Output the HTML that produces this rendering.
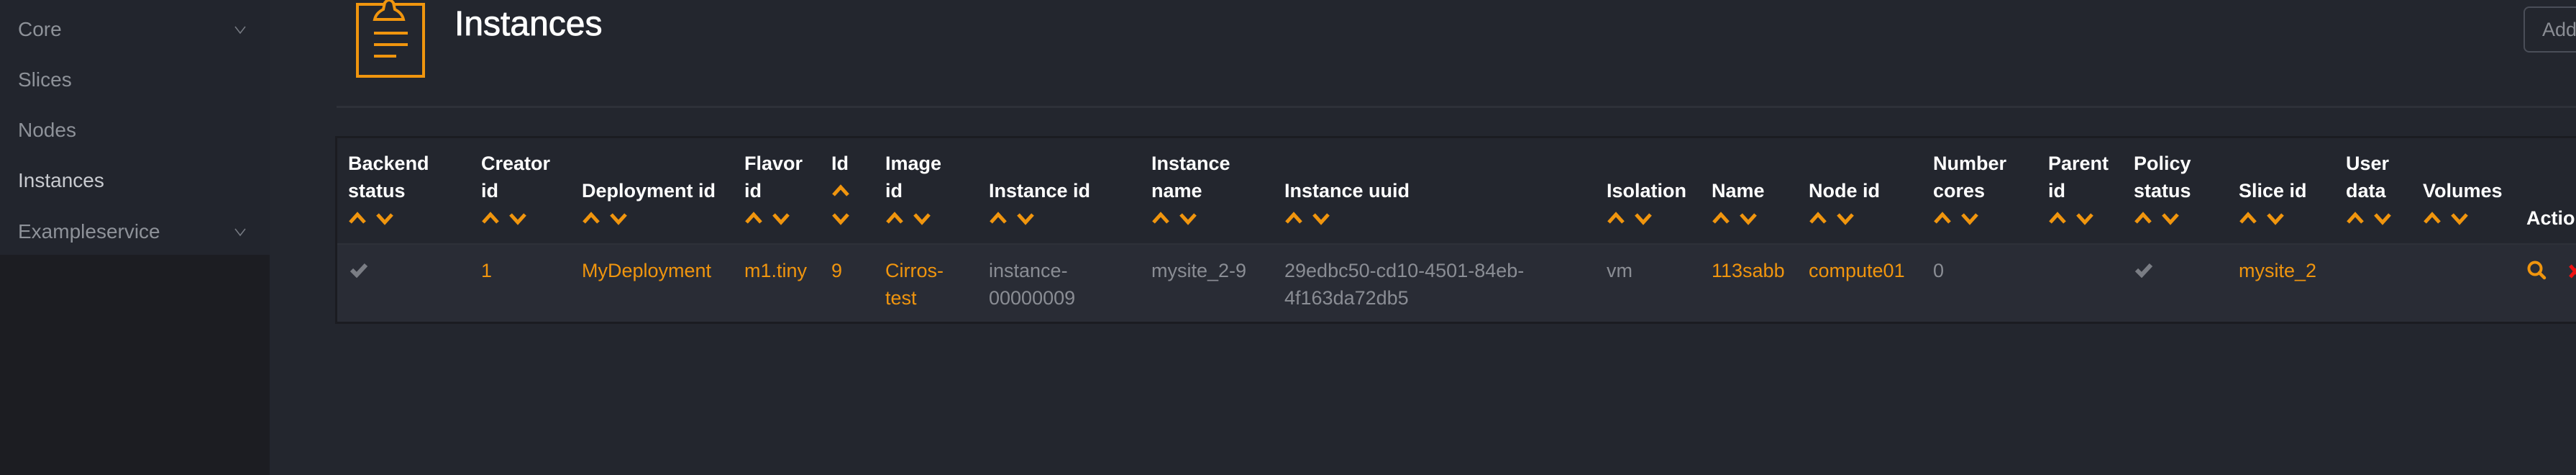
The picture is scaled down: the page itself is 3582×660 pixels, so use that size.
<!DOCTYPE html>
<html><head><meta charset="utf-8"><style>
*{margin:0;padding:0;box-sizing:border-box}
body{width:3582px;height:660px;background:#23262e;font-family:"Liberation Sans",sans-serif;position:relative;overflow:hidden}
.a{position:absolute;white-space:nowrap}
.nav{position:absolute;left:25px;font-size:28px;color:#8e9299;line-height:34px}
.h{position:absolute;font-size:27px;font-weight:bold;color:#fff;line-height:38px;white-space:nowrap}
.c{position:absolute;font-size:27px;color:#8a8d94;line-height:38px;white-space:nowrap}
.o{color:#f0950e}
</style></head><body>
<div class="a" style="left:0;top:0;width:375px;height:354px;background:#22252d"></div>
<div class="a" style="left:0;top:354px;width:375px;height:306px;background:#1c1d22"></div>
<div class="nav" style="top:24px">Core</div>
<div class="nav" style="top:94px">Slices</div>
<div class="nav" style="top:164px">Nodes</div>
<div class="nav" style="top:234px;color:#c8cacf">Instances</div>
<div class="nav" style="top:305px">Exampleservice</div>
<svg class="a" style="left:326px;top:36px" width="16" height="12"><polyline points="1,1 8,10 15,1" fill="none" stroke="#777b83" stroke-width="1.5"/></svg>
<svg class="a" style="left:326px;top:317px" width="16" height="12"><polyline points="1,1 8,10 15,1" fill="none" stroke="#777b83" stroke-width="1.5"/></svg>

<svg class="a" style="left:494px;top:0" width="100" height="110">
<rect x="3" y="6" width="92" height="100" fill="none" stroke="#f0950e" stroke-width="4"/>
<path d="M27 27 Q29 18 39 13 L41 4 Q47 -4 53 4 L55 13 Q65 18 67 27 Z" fill="#23262e" stroke="#f0950e" stroke-width="4"/>
<line x1="26" y1="46" x2="73" y2="46" stroke="#f0950e" stroke-width="4"/>
<line x1="26" y1="62" x2="73" y2="62" stroke="#f0950e" stroke-width="4"/>
<line x1="26" y1="78" x2="57" y2="78" stroke="#f0950e" stroke-width="4"/>
</svg>
<div class="a" style="left:632px;top:6px;font-size:48px;color:#fff;line-height:56px;-webkit-text-stroke:0.8px #fff">Instances</div>
<div class="a" style="left:3509px;top:9px;width:100px;height:64px;border:2px solid #4a4e58;border-radius:8px;color:#8a8d94;font-size:27px;line-height:60px;padding-left:24px">Add</div>
<div class="a" style="left:468px;top:147px;width:3114px;height:3px;background:#2e3139"></div>

<div class="a" style="left:466px;top:189px;width:3130px;height:261px;border:3px solid #1b1c21;background:#23262e"></div>
<div class="a" style="left:469px;top:338px;width:3120px;height:109px;background:#292c35;border-top:2px solid #2e3139"></div>

<div class="h" style="left:484px;top:208px">Backend<br>status</div>
<div class="h" style="left:669px;top:208px">Creator<br>id</div>
<div class="h" style="left:809px;top:246px">Deployment id</div>
<div class="h" style="left:1035px;top:208px">Flavor<br>id</div>
<div class="h" style="left:1156px;top:208px">Id</div>
<div class="h" style="left:1231px;top:208px">Image<br>id</div>
<div class="h" style="left:1375px;top:246px">Instance id</div>
<div class="h" style="left:1601px;top:208px">Instance<br>name</div>
<div class="h" style="left:1786px;top:246px">Instance uuid</div>
<div class="h" style="left:2234px;top:246px">Isolation</div>
<div class="h" style="left:2380px;top:246px">Name</div>
<div class="h" style="left:2515px;top:246px">Node id</div>
<div class="h" style="left:2688px;top:208px">Number<br>cores</div>
<div class="h" style="left:2848px;top:208px">Parent<br>id</div>
<div class="h" style="left:2967px;top:208px">Policy<br>status</div>
<div class="h" style="left:3113px;top:246px">Slice id</div>
<div class="h" style="left:3262px;top:208px">User<br>data</div>
<div class="h" style="left:3369px;top:246px">Volumes</div>
<div class="h" style="left:3513px;top:284px">Actions</div>

<svg class="a" style="left:0;top:0" width="3582" height="340">
<defs>
<g id="u"><polyline points="2,15 12,4 22,15" fill="none" stroke="#f0950e" stroke-width="5"/></g>
<g id="d"><polyline points="2,4 12,15 22,4" fill="none" stroke="#f0950e" stroke-width="5"/></g>
</defs>
<g transform="translate(0,294)">
<use href="#u" x="485"/><use href="#d" x="523"/>
<use href="#u" x="670"/><use href="#d" x="708"/>
<use href="#u" x="810"/><use href="#d" x="848"/>
<use href="#u" x="1036"/><use href="#d" x="1074"/>
<use href="#d" x="1157"/>
<use href="#u" x="1232"/><use href="#d" x="1270"/>
<use href="#u" x="1376"/><use href="#d" x="1414"/>
<use href="#u" x="1602"/><use href="#d" x="1640"/>
<use href="#u" x="1787"/><use href="#d" x="1825"/>
<use href="#u" x="2235"/><use href="#d" x="2273"/>
<use href="#u" x="2381"/><use href="#d" x="2419"/>
<use href="#u" x="2516"/><use href="#d" x="2554"/>
<use href="#u" x="2689"/><use href="#d" x="2727"/>
<use href="#u" x="2849"/><use href="#d" x="2887"/>
<use href="#u" x="2968"/><use href="#d" x="3006"/>
<use href="#u" x="3114"/><use href="#d" x="3152"/>
<use href="#u" x="3263"/><use href="#d" x="3301"/>
<use href="#u" x="3370"/><use href="#d" x="3408"/>
</g>
<use href="#u" x="1157" y="256"/>
</svg>

<svg class="a" style="left:486px;top:364px" width="26" height="22"><polyline points="3,11 10,18 23,4" fill="none" stroke="#7a7d84" stroke-width="6"/></svg>
<div class="c o" style="left:669px;top:357px">1</div>
<div class="c o" style="left:809px;top:357px">MyDeployment</div>
<div class="c o" style="left:1035px;top:357px">m1.tiny</div>
<div class="c o" style="left:1156px;top:357px">9</div>
<div class="c o" style="left:1231px;top:357px">Cirros-<br>test</div>
<div class="c" style="left:1375px;top:357px">instance-<br>00000009</div>
<div class="c" style="left:1601px;top:357px">mysite_2-9</div>
<div class="c" style="left:1786px;top:357px">29edbc50-cd10-4501-84eb-<br>4f163da72db5</div>
<div class="c" style="left:2234px;top:357px">vm</div>
<div class="c o" style="left:2380px;top:357px">113sabb</div>
<div class="c o" style="left:2515px;top:357px">compute01</div>
<div class="c" style="left:2688px;top:357px">0</div>
<svg class="a" style="left:2968px;top:364px" width="26" height="22"><polyline points="3,11 10,18 23,4" fill="none" stroke="#7a7d84" stroke-width="6"/></svg>
<div class="c o" style="left:3113px;top:357px">mysite_2</div>
<svg class="a" style="left:3513px;top:362px" width="30" height="28"><circle cx="12" cy="11" r="8.5" fill="none" stroke="#f0950e" stroke-width="4"/><line x1="18" y1="17" x2="25" y2="24" stroke="#f0950e" stroke-width="4.5" stroke-linecap="round"/></svg>
<svg class="a" style="left:3571px;top:366px" width="20" height="22"><path d="M3 3 L17 19 M17 3 L3 19" stroke="#ee1111" stroke-width="5"/></svg>
</body></html>
